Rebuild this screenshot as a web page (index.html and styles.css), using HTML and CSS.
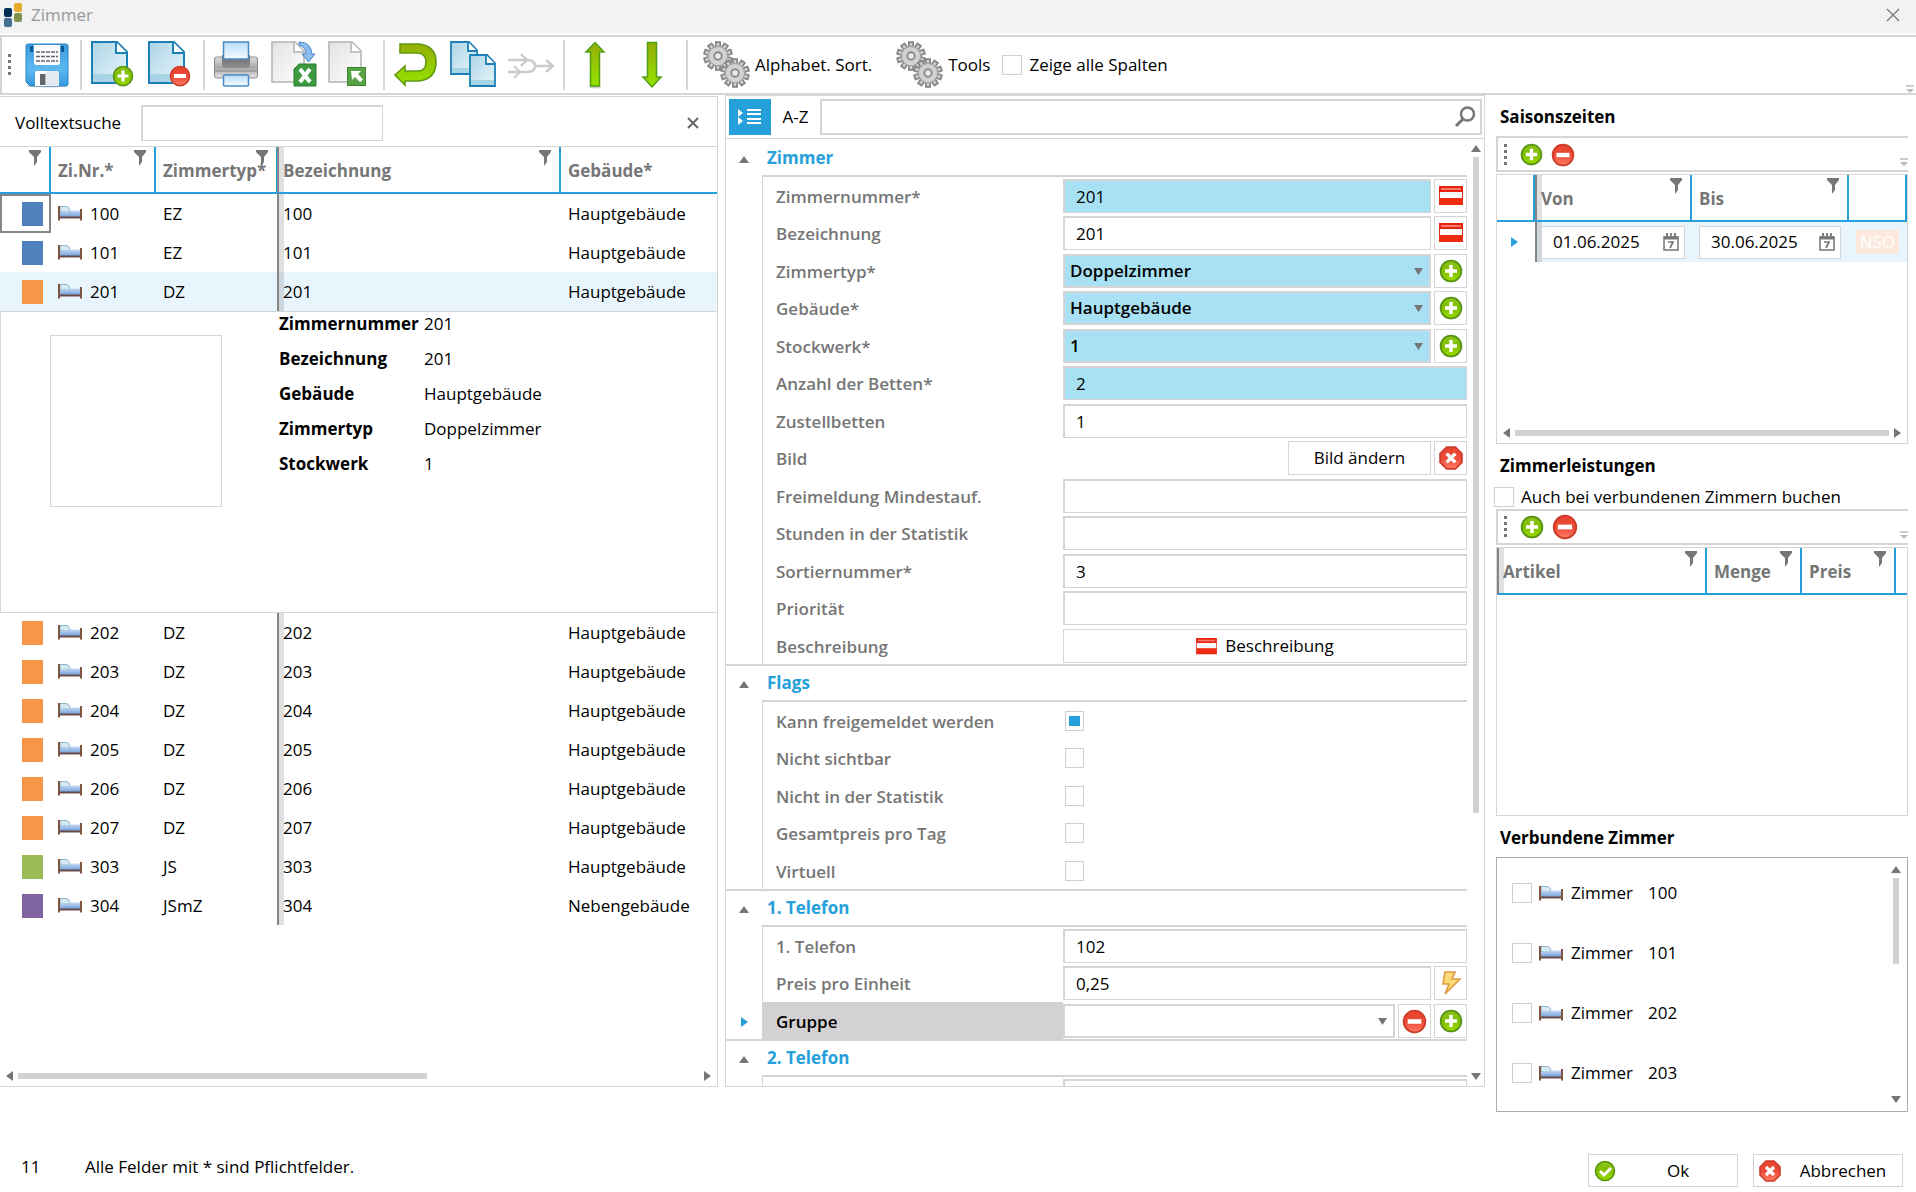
FILE: index.html
```html
<!DOCTYPE html>
<html lang="de">
<head>
  <meta charset="UTF-8">
  <title>Zimmer</title>
  <link rel="stylesheet" href="styles.css">
</head>
<body>
  <!-- Icons -->
  <svg class="sprite" width="0" height="0" aria-hidden="true">
    <defs>
      <linearGradient id="gBlue" x1="0" y1="0" x2="0" y2="1"><stop offset="0" stop-color="#3f9bdc"/><stop offset=".6" stop-color="#5cb8ee"/><stop offset="1" stop-color="#3596dc"/></linearGradient>
      <linearGradient id="gPage" x1="0" y1="0" x2="1" y2="1"><stop offset="0" stop-color="#add4e6"/><stop offset="1" stop-color="#e9f6fb"/></linearGradient>
      <linearGradient id="gGrey" x1="0" y1="0" x2="1" y2="1"><stop offset="0" stop-color="#e2e2e2"/><stop offset="1" stop-color="#ffffff"/></linearGradient>
      <linearGradient id="gGreen" x1="0" y1="0" x2="0" y2="1"><stop offset="0" stop-color="#8cc21c"/><stop offset=".5" stop-color="#7fbf00"/><stop offset="1" stop-color="#9ddb00"/></linearGradient>
      <linearGradient id="gRed" x1="0" y1="0" x2="0" y2="1"><stop offset="0" stop-color="#e8442f"/><stop offset=".5" stop-color="#ea4b37"/><stop offset="1" stop-color="#ff7a66"/></linearGradient>
      <linearGradient id="gMetal" x1="0" y1="0" x2="0" y2="1"><stop offset="0" stop-color="#dcdcdc"/><stop offset=".5" stop-color="#a9a9a9"/><stop offset="1" stop-color="#e0e0e0"/></linearGradient>
      <linearGradient id="gDark" x1="0" y1="0" x2="0" y2="1"><stop offset="0" stop-color="#6c6c6c"/><stop offset="1" stop-color="#8e8e8e"/></linearGradient>
      <linearGradient id="gPaper" x1="0" y1="0" x2="0" y2="1"><stop offset="0" stop-color="#b9defa"/><stop offset="1" stop-color="#f4fbff"/></linearGradient>
      <linearGradient id="gArrow" x1="0" y1="0" x2="0" y2="1"><stop offset="0" stop-color="#93ad08"/><stop offset="1" stop-color="#96e400"/></linearGradient>
      <linearGradient id="gBed" x1="0" y1="0" x2="0" y2="1"><stop offset="0" stop-color="#c9d9f4"/><stop offset="1" stop-color="#6f9fdb"/></linearGradient>
    </defs>

    <symbol id="i-logo" viewBox="0 0 18 24">
      <rect x="0" y="5" width="8" height="9" rx="2" fill="#032e54"/>
      <rect x="10" y="0" width="8" height="9" rx="2" fill="#e7ab2d"/>
      <rect x="0" y="15" width="8" height="9" rx="2" fill="#446f8e"/>
      <rect x="10" y="10" width="8" height="9" rx="2" fill="#7d924c"/>
    </symbol>
    <symbol id="i-save" viewBox="0 0 48 48">
      <ellipse cx="23" cy="45" rx="21" ry="1.500" fill="#c9c9c9"/>
      <path d="M4 3H42Q44 3 44 5V43Q44 45 42 45H6L2 41V5Q2 3 4 3Z" fill="url(#gBlue)" stroke="#2a86c8"/>
      <rect x="6" y="5" width="3" height="6" fill="#0a5a94"/><rect x="37" y="5" width="3" height="6" fill="#0a5a94"/>
      <path d="M10 4H36V22Q36 24 34 24H12Q10 24 10 22Z" fill="#fafcff"/>
      <path d="M12 11h22M12 15.500h22M12 20h22" stroke="#666" stroke-width="1.400" stroke-dasharray="4 1"/>
      <path d="M11 45V32Q11 30 13 30H33Q35 30 35 32V45Z" fill="#e4eaf4"/>
      <path d="M11 45V32Q11 30 13 30H22V45Z" fill="#fff"/>
      <rect x="16" y="33" width="5.500" height="11" fill="#63666b"/>
    </symbol>
    <symbol id="i-page" viewBox="0 0 48 48">
      <path d="M2 1H27L37 11V42H2Z" fill="url(#gPage)" stroke="#1b80b5" stroke-width="2"/>
      <path d="M3 33H36V41H3Z" fill="#a9d4e5"/>
      <path d="M26 1V12H37" fill="#fff" stroke="#1b80b5" stroke-width="2"/>
    </symbol>
    <symbol id="i-plus" viewBox="0 0 22 22">
      <circle cx="11" cy="11.500" r="10" fill="#b9cba0"/>
      <circle cx="11" cy="11" r="9.500" fill="url(#gGreen)" stroke="#569413" stroke-width="1.600"/>
      <path d="M11 5.500V16.500M5.500 11H16.500" stroke="#fff" stroke-width="3.200"/>
    </symbol>
    <symbol id="i-minus" viewBox="0 0 22 22">
      <circle cx="11" cy="11.500" r="10" fill="#dcb0aa"/>
      <circle cx="11" cy="11" r="9.500" fill="url(#gRed)" stroke="#cf3c2b" stroke-width="1.600"/>
      <rect x="5" y="9" width="12" height="4" fill="#fff"/>
    </symbol>
    <symbol id="i-new" viewBox="0 0 48 48">
      <use href="#i-page" width="48" height="48"/><use href="#i-plus" x="22" y="24" width="22" height="22"/>
    </symbol>
    <symbol id="i-del" viewBox="0 0 48 48">
      <use href="#i-page" width="48" height="48"/><use href="#i-minus" x="22" y="24" width="22" height="22"/>
    </symbol>
    <symbol id="i-print" viewBox="0 0 48 48">
      <rect x="1.500" y="16" width="43" height="21" rx="2" fill="url(#gMetal)" stroke="#8b8b8b"/>
      <path d="M9 14H37V24Q37 27 34 27H12Q9 27 9 24Z" fill="url(#gDark)"/>
      <rect x="10.500" y="1" width="25" height="17" fill="url(#gPaper)" stroke="#4b8bc6" stroke-width="1.500"/>
      <path d="M2 30H44" stroke="#848484"/>
      <rect x="10.500" y="34" width="25" height="11" rx="1" fill="url(#gPaper)" stroke="#4b8bc6" stroke-width="1.500"/>
    </symbol>
    <symbol id="i-greypage" viewBox="0 0 48 48">
      <path d="M2 1H25L34 10V41H2Z" fill="url(#gGrey)" stroke="#b4b4b4" stroke-width="1.500"/>
      <path d="M24 1V11H34" fill="#fff" stroke="#b4b4b4" stroke-width="1.500"/>
    </symbol>
    <symbol id="i-excel" viewBox="0 0 48 48">
      <use href="#i-greypage" width="48" height="48"/>
      <path d="M29 1Q41 1 42 13H45L38.500 21L32 13H36Q36 6 29 4Z" fill="#8bbdec" stroke="#4a87c4"/>
      <path d="M29 23H46V45H24V28Z" fill="#3c9a40" stroke="#287b2d"/>
      <path d="M30 28L40 41M40 28L30 41" stroke="#fff" stroke-width="4"/>
    </symbol>
    <symbol id="i-export" viewBox="0 0 48 48">
      <use href="#i-greypage" width="48" height="48"/>
      <rect x="20.500" y="26.500" width="18" height="18" fill="#57a345" stroke="#3b8430"/>
      <path d="M24 30H34L31 33L36 38.500L33 41L28 36L25 39Z" fill="#fff"/>
    </symbol>
    <symbol id="i-undo" viewBox="0 0 48 48">
      <path d="M7 3H26Q43 5 43 21Q43 38 26 40H12V44L2 34L12 25V30H25Q33 30 33 21Q33 13 25 12H7Z" fill="url(#gArrow)" stroke="#5f9a0f" stroke-width="1.600"/>
    </symbol>
    <symbol id="i-copy" viewBox="0 0 48 48">
      <path d="M1 1H19L27 9V33H1Z" fill="url(#gPage)" stroke="#1b80b5" stroke-width="1.800"/>
      <path d="M2 27H26V32H2Z" fill="#a9d4e5"/><path d="M18 1V10H27" fill="#fff" stroke="#1b80b5" stroke-width="1.800"/>
      <path d="M20 14H37L45 22V45H20Z" fill="url(#gPage)" stroke="#1b80b5" stroke-width="1.800"/>
      <path d="M21 39H44V44H21Z" fill="#a9d4e5"/><path d="M36 14V23H45" fill="#fff" stroke="#1b80b5" stroke-width="1.800"/>
    </symbol>
    <symbol id="i-merge" viewBox="0 0 48 48">
      <path d="M1 19H20Q28 19 28 25Q28 31 20 31H1M28 25H45M14 13L20 19L14 25M7 25L13 31L7 37M39 19L46 25L39 31" fill="none" stroke="#cbcbcb" stroke-width="2.400"/>
    </symbol>
    <symbol id="i-up" viewBox="2 0 48 48">
      <ellipse cx="24" cy="46" rx="6" ry="1.500" fill="#ccc"/>
      <path d="M24 1.500L33 11H28.500V45H19.500V11H15Z" fill="url(#gArrow)" stroke="#519e14" stroke-width="1.500"/>
    </symbol>
    <symbol id="i-down" viewBox="2 0 48 48">
      <path d="M24 46L33 36H28.500V1.500H19.500V36H15Z" fill="url(#gArrow)" stroke="#519e14" stroke-width="1.500"/>
    </symbol>
    <symbol id="i-gear" viewBox="0 0 28 28">
      <g fill="#cfcfcf" stroke="#858585" stroke-width="1.600">
        <rect x="12" y="1" width="4" height="26"/>
        <rect x="12" y="1" width="4" height="26" transform="rotate(36 14 14)"/>
        <rect x="12" y="1" width="4" height="26" transform="rotate(72 14 14)"/>
        <rect x="12" y="1" width="4" height="26" transform="rotate(108 14 14)"/>
        <rect x="12" y="1" width="4" height="26" transform="rotate(144 14 14)"/>
      </g>
      <circle cx="14" cy="14" r="9" fill="#d2d2d2" stroke="#a2a2a2"/>
      <circle cx="14" cy="14" r="3.500" fill="#e9e9e9" stroke="#8a8a8a" stroke-width="1.800"/>
    </symbol>
    <symbol id="i-gears" viewBox="0 0 48 48">
      <use href="#i-gear" x="0" y="0" width="30" height="30"/><use href="#i-gear" x="17" y="17" width="30" height="30"/>
    </symbol>
    <symbol id="i-bed" viewBox="0 0 24 16">
      <path d="M2 1.500H8Q12 2 12 7H2Z" fill="#d4e9f2" stroke="#8db6cd"/>
      <path d="M2 7H12V5.500H22.500V12H2Z" fill="url(#gBed)"/>
      <path d="M1 12.500H23" stroke="#6b4a48" stroke-width="2"/>
      <path d="M1 1V15.500M23 4V15.500" stroke="#80543f" stroke-width="2"/>
    </symbol>
    <symbol id="i-filter" viewBox="0 0 12 16">
      <path d="M0 0H12V2L8 7V12L5 16V7L0 2Z" fill="#767676"/>
    </symbol>
    <symbol id="i-flag" viewBox="0 0 24 20">
      <rect x=".5" y=".5" width="23" height="18" fill="#fff" stroke="#c9362a"/>
      <rect x="0" y="0" width="24" height="6" fill="#e8200e"/><rect x="2" y="2" width="20" height="2" fill="#f57a6c"/>
      <rect x="1" y="6" width="22" height="6" fill="#fbfbfb"/>
      <rect x="0" y="12" width="24" height="7" fill="#ee2c12"/>
    </symbol>
    <symbol id="i-cancel" viewBox="0 0 22 22">
      <path d="M7 1H15L21 7V15L15 21H7L1 15V7Z" fill="url(#gRed)" stroke="#cf3c2b" stroke-width="1.600"/>
      <path d="M7 7L15 15M15 7L7 15" stroke="#fff" stroke-width="3.200"/>
    </symbol>
    <symbol id="i-ok" viewBox="0 0 22 22">
      <circle cx="11" cy="11" r="9.500" fill="url(#gGreen)" stroke="#569413" stroke-width="1.600"/>
      <path d="M6 11L10 15L17 8" fill="none" stroke="#fff" stroke-width="3"/>
    </symbol>
    <symbol id="i-bolt" viewBox="0 0 22 24">
      <path d="M5 1H15L12 8H20L5 23L9 13H3Z" fill="#fbdb78" stroke="#dd9a3e" stroke-width="1.600"/>
    </symbol>
    <symbol id="i-cal" viewBox="0 0 16 18">
      <path d="M1 4H15V17H1Z" fill="none" stroke="#767676" stroke-width="1.500"/>
      <path d="M1 5H15" stroke="#767676" stroke-width="3"/>
      <path d="M4 0V4M8 0V3M12 0V4" stroke="#767676" stroke-width="1.800"/>
      <path d="M5 9H10L7 15" fill="none" stroke="#767676" stroke-width="1.700"/>
    </symbol>
    <symbol id="i-search" viewBox="0 0 22 22">
      <circle cx="13.500" cy="8" r="6.500" fill="none" stroke="#767676" stroke-width="2.500"/>
      <path d="M9 13L2 20" stroke="#767676" stroke-width="3"/>
    </symbol>
    <symbol id="i-list" viewBox="0 0 24 18">
      <path d="M0 1L5 5L0 9ZM0 9L5 13L0 17Z" fill="#fff"/>
      <path d="M9 2H23M9 6H23M9 11H23M9 15H23" stroke="#fff" stroke-width="1.800"/>
    </symbol>
    <symbol id="i-close" viewBox="0 0 14 14">
      <path d="M1 1L13 13M13 1L1 13" stroke="currentColor" stroke-width="1.300"/>
    </symbol>
    <symbol id="i-x" viewBox="0 0 12 12">
      <path d="M1 1L11 11M11 1L1 11" stroke="#666" stroke-width="2"/>
    </symbol>
    <symbol id="i-more" viewBox="0 0 8 8">
      <path d="M0 1H8" stroke="#bbb" stroke-width="1.500"/><path d="M0 4H8L4 8Z" fill="#bbb"/>
    </symbol>
    <symbol id="i-grip" viewBox="0 0 4 22">
      <path d="M0 0h3v3H0ZM0 6h3v3H0ZM0 12h3v3H0ZM0 18h3v3H0Z" fill="#767676"/>
    </symbol>
  </svg>

  <header class="titlebar">
    <svg class="logo"><use href="#i-logo"/></svg>
    <h1>Zimmer</h1>
    <button class="win-close" aria-label="Schließen"><svg width="14" height="14"><use href="#i-close"/></svg></button>
  </header>

  <div class="toolbar">
    <svg class="grip"><use href="#i-grip"/></svg>
    <div class="group">
      <button class="tool" aria-label="Speichern"><svg><use href="#i-save"/></svg></button>
    </div>
    <span class="sep"></span>
    <div class="group">
      <button class="tool" aria-label="Neu"><svg><use href="#i-new"/></svg></button>
      <button class="tool" aria-label="Löschen"><svg><use href="#i-del"/></svg></button>
    </div>
    <span class="sep"></span>
    <div class="group">
      <button class="tool" aria-label="Drucken"><svg><use href="#i-print"/></svg></button>
      <button class="tool" aria-label="Excel Export"><svg><use href="#i-excel"/></svg></button>
      <button class="tool" aria-label="Export"><svg><use href="#i-export"/></svg></button>
    </div>
    <span class="sep"></span>
    <div class="group">
      <button class="tool" aria-label="Rückgängig"><svg><use href="#i-undo"/></svg></button>
      <button class="tool" aria-label="Kopieren"><svg><use href="#i-copy"/></svg></button>
      <button class="tool" aria-label="Zusammenführen" disabled><svg><use href="#i-merge"/></svg></button>
    </div>
    <span class="sep"></span>
    <div class="group">
      <button class="tool" aria-label="Nach oben"><svg><use href="#i-up"/></svg></button>
      <button class="tool" aria-label="Nach unten"><svg><use href="#i-down"/></svg></button>
    </div>
    <span class="sep"></span>
    <div class="group text-tools">
      <button class="tool"><svg><use href="#i-gears"/></svg>Alphabet. Sort.</button>
      <button class="tool"><svg><use href="#i-gears"/></svg>Tools</button>
    </div>
    <label class="check"><input type="checkbox">Zeige alle Spalten</label>
    <svg class="more"><use href="#i-more"/></svg>
  </div>

  <main>
    <!-- Zimmerliste -->
    <section class="panel rooms">
      <div class="fulltext">
        <label for="volltext">Volltextsuche</label>
        <input type="text" id="volltext">
        <button class="plain" aria-label="Suche schließen"><svg width="12" height="12"><use href="#i-x"/></svg></button>
      </div>
      <table class="room-table">
        <colgroup><col class="c-color"><col class="c-nr"><col class="c-typ"><col class="c-bez"><col></colgroup>
        <thead>
          <tr>
            <th><div><span></span><svg class="filter"><use href="#i-filter"/></svg></div></th>
            <th><div><span>Zi.Nr.*</span><svg class="filter"><use href="#i-filter"/></svg></div></th>
            <th><div><span>Zimmertyp*</span><svg class="filter"><use href="#i-filter"/></svg></div></th>
            <th class="split"><div><span>Bezeichnung</span><svg class="filter"><use href="#i-filter"/></svg></div></th>
            <th><div><span>Gebäude*</span></div></th>
          </tr>
        </thead>
        <tbody>
          <tr><td class="focus"><i class="swatch blue"></i></td><td><svg class="bed"><use href="#i-bed"/></svg>100</td><td>EZ</td><td class="split">100</td><td>Hauptgebäude</td></tr>
          <tr><td><i class="swatch blue"></i></td><td><svg class="bed"><use href="#i-bed"/></svg>101</td><td>EZ</td><td class="split">101</td><td>Hauptgebäude</td></tr>
          <tr class="selected"><td><i class="swatch orange"></i></td><td><svg class="bed"><use href="#i-bed"/></svg>201</td><td>DZ</td><td class="split">201</td><td>Hauptgebäude</td></tr>
          <tr class="detail">
            <td colspan="5">
              <div class="detail-box">
                <div class="picture"></div>
                <dl>
                  <dt>Zimmernummer</dt><dd>201</dd>
                  <dt>Bezeichnung</dt><dd>201</dd>
                  <dt>Gebäude</dt><dd>Hauptgebäude</dd>
                  <dt>Zimmertyp</dt><dd>Doppelzimmer</dd>
                  <dt>Stockwerk</dt><dd>1</dd>
                </dl>
              </div>
            </td>
          </tr>
          <tr><td><i class="swatch orange"></i></td><td><svg class="bed"><use href="#i-bed"/></svg>202</td><td>DZ</td><td class="split">202</td><td>Hauptgebäude</td></tr>
          <tr><td><i class="swatch orange"></i></td><td><svg class="bed"><use href="#i-bed"/></svg>203</td><td>DZ</td><td class="split">203</td><td>Hauptgebäude</td></tr>
          <tr><td><i class="swatch orange"></i></td><td><svg class="bed"><use href="#i-bed"/></svg>204</td><td>DZ</td><td class="split">204</td><td>Hauptgebäude</td></tr>
          <tr><td><i class="swatch orange"></i></td><td><svg class="bed"><use href="#i-bed"/></svg>205</td><td>DZ</td><td class="split">205</td><td>Hauptgebäude</td></tr>
          <tr><td><i class="swatch orange"></i></td><td><svg class="bed"><use href="#i-bed"/></svg>206</td><td>DZ</td><td class="split">206</td><td>Hauptgebäude</td></tr>
          <tr><td><i class="swatch orange"></i></td><td><svg class="bed"><use href="#i-bed"/></svg>207</td><td>DZ</td><td class="split">207</td><td>Hauptgebäude</td></tr>
          <tr><td><i class="swatch green"></i></td><td><svg class="bed"><use href="#i-bed"/></svg>303</td><td>JS</td><td class="split">303</td><td>Hauptgebäude</td></tr>
          <tr><td><i class="swatch purple"></i></td><td><svg class="bed"><use href="#i-bed"/></svg>304</td><td>JSmZ</td><td class="split">304</td><td>Nebengebäude</td></tr>
        </tbody>
      </table>
      <div class="hscroll">
        <i class="arrow left"></i><div class="track"><div class="thumb part"></div></div><i class="arrow right"></i>
      </div>
    </section>

    <!-- Eigenschaften -->
    <section class="panel props">
      <div class="prop-search">
        <button class="cat" aria-label="Kategorien"><svg width="24" height="18"><use href="#i-list"/></svg></button>
        <button class="az">A-Z</button>
        <div class="search-box">
          <input type="text" aria-label="Suche"><svg width="22" height="22"><use href="#i-search"/></svg>
        </div>
      </div>
      <div class="prop-body">
        <div class="prop-list">
          <h2><i class="arrow up"></i><span>Zimmer</span></h2>
          <div class="rows">
            <div class="row"><i></i><label for="znr">Zimmernummer*</label><div class="field"><input class="req" type="text" id="znr" value="201"><button aria-label="Übersetzung"><svg width="24" height="20"><use href="#i-flag"/></svg></button></div></div>
            <div class="row"><i></i><label for="bez">Bezeichnung</label><div class="field"><input type="text" id="bez" value="201"><button aria-label="Übersetzung"><svg width="24" height="20"><use href="#i-flag"/></svg></button></div></div>
            <div class="row"><i></i><label for="typ">Zimmertyp*</label><div class="field"><select class="req" id="typ"><option>Doppelzimmer</option></select><button aria-label="Neu"><svg width="24" height="24"><use href="#i-plus"/></svg></button></div></div>
            <div class="row"><i></i><label for="geb">Gebäude*</label><div class="field"><select class="req" id="geb"><option>Hauptgebäude</option></select><button aria-label="Neu"><svg width="24" height="24"><use href="#i-plus"/></svg></button></div></div>
            <div class="row"><i></i><label for="stock">Stockwerk*</label><div class="field"><select class="req" id="stock"><option>1</option></select><button aria-label="Neu"><svg width="24" height="24"><use href="#i-plus"/></svg></button></div></div>
            <div class="row"><i></i><label for="betten">Anzahl der Betten*</label><div class="field"><input class="req" type="text" id="betten" value="2"></div></div>
            <div class="row"><i></i><label for="zustell">Zustellbetten</label><div class="field"><input type="text" id="zustell" value="1"></div></div>
            <div class="row"><i></i><label for="bild">Bild</label><div class="field end"><button class="wide" id="bild">Bild ändern</button><button aria-label="Bild löschen"><svg width="24" height="24"><use href="#i-cancel"/></svg></button></div></div>
            <div class="row"><i></i><label for="frei">Freimeldung Mindestauf.</label><div class="field"><input type="text" id="frei"></div></div>
            <div class="row"><i></i><label for="stunden">Stunden in der Statistik</label><div class="field"><input type="text" id="stunden"></div></div>
            <div class="row"><i></i><label for="sort">Sortiernummer*</label><div class="field"><input type="text" id="sort" value="3"></div></div>
            <div class="row"><i></i><label for="prio">Priorität</label><div class="field"><input type="text" id="prio"></div></div>
            <div class="row"><i></i><label for="beschr">Beschreibung</label><div class="field"><button class="full" id="beschr"><svg width="21" height="17"><use href="#i-flag"/></svg>Beschreibung</button></div></div>
          </div>
          <h2><i class="arrow up"></i><span>Flags</span></h2>
          <div class="rows">
            <div class="row"><i></i><label for="f1">Kann freigemeldet werden</label><div class="field flag"><input type="checkbox" id="f1" checked></div></div>
            <div class="row"><i></i><label for="f2">Nicht sichtbar</label><div class="field flag"><input type="checkbox" id="f2"></div></div>
            <div class="row"><i></i><label for="f3">Nicht in der Statistik</label><div class="field flag"><input type="checkbox" id="f3"></div></div>
            <div class="row"><i></i><label for="f4">Gesamtpreis pro Tag</label><div class="field flag"><input type="checkbox" id="f4"></div></div>
            <div class="row"><i></i><label for="f5">Virtuell</label><div class="field flag"><input type="checkbox" id="f5"></div></div>
          </div>
          <h2><i class="arrow up"></i><span>1. Telefon</span></h2>
          <div class="rows">
            <div class="row"><i></i><label for="tel1">1. Telefon</label><div class="field"><input type="text" id="tel1" value="102"></div></div>
            <div class="row"><i></i><label for="preis">Preis pro Einheit</label><div class="field"><input type="text" id="preis" value="0,25"><button aria-label="Berechnen"><svg width="22" height="24"><use href="#i-bolt"/></svg></button></div></div>
            <div class="row current"><i class="arrow right"></i><label for="gruppe">Gruppe</label><div class="field"><select id="gruppe"><option></option></select><button aria-label="Entfernen"><svg width="25" height="25"><use href="#i-minus"/></svg></button><button aria-label="Neu"><svg width="24" height="24"><use href="#i-plus"/></svg></button></div></div>
          </div>
          <h2><i class="arrow up"></i><span>2. Telefon</span></h2>
          <div class="rows">
            <div class="row"><i></i><label for="tel2"></label><div class="field"><input type="text" id="tel2" aria-label="2. Telefon"></div></div>
          </div>
        </div>
        <div class="vscroll">
          <i class="arrow up"></i><div class="track"><div class="thumb tall"></div></div><i class="arrow down"></i>
        </div>
      </div>
    </section>

    <!-- Rechte Spalte -->
    <aside>
      <h3>Saisonszeiten</h3>
      <div class="mini-toolbar">
        <svg class="grip"><use href="#i-grip"/></svg>
        <button class="plain" aria-label="Hinzufügen"><svg width="23" height="23"><use href="#i-plus"/></svg></button>
        <button class="plain" aria-label="Entfernen"><svg width="24" height="24"><use href="#i-minus"/></svg></button>
        <svg class="more"><use href="#i-more"/></svg>
      </div>
      <div class="grid-box season">
        <table>
          <colgroup><col class="s-mark"><col class="s-date"><col class="s-date"><col></colgroup>
          <thead>
            <tr>
              <th></th>
              <th class="split"><div><span>Von</span><svg class="filter"><use href="#i-filter"/></svg></div></th>
              <th><div><span>Bis</span><svg class="filter"><use href="#i-filter"/></svg></div></th>
              <th></th>
            </tr>
          </thead>
          <tbody>
            <tr>
              <td class="mark"><i class="arrow right"></i></td>
              <td class="split"><div class="date"><input type="text" value="01.06.2025" aria-label="Von"><svg width="16" height="18"><use href="#i-cal"/></svg></div></td>
              <td><div class="date"><input type="text" value="30.06.2025" aria-label="Bis"><svg width="16" height="18"><use href="#i-cal"/></svg></div></td>
              <td class="nso"><span>NSO</span></td>
            </tr>
          </tbody>
        </table>
        <div class="hscroll">
          <i class="arrow left"></i><div class="track"><div class="thumb"></div></div><i class="arrow right"></i>
        </div>
      </div>

      <h3>Zimmerleistungen</h3>
      <label class="check"><input type="checkbox">Auch bei verbundenen Zimmern buchen</label>
      <div class="mini-toolbar">
        <svg class="grip"><use href="#i-grip"/></svg>
        <button class="plain" aria-label="Hinzufügen"><svg width="24" height="24"><use href="#i-plus"/></svg></button>
        <button class="plain" aria-label="Entfernen"><svg width="26" height="26"><use href="#i-minus"/></svg></button>
        <svg class="more"><use href="#i-more"/></svg>
      </div>
      <div class="grid-box">
        <table>
          <colgroup><col><col class="a-menge"><col class="a-preis"><col class="a-rest"></colgroup>
          <thead>
            <tr>
              <th class="split"><div><span>Artikel</span><svg class="filter"><use href="#i-filter"/></svg></div></th>
              <th><div><span>Menge</span><svg class="filter"><use href="#i-filter"/></svg></div></th>
              <th><div><span>Preis</span><svg class="filter"><use href="#i-filter"/></svg></div></th>
              <th></th>
            </tr>
          </thead>
        </table>
      </div>

      <h3>Verbundene Zimmer</h3>
      <div class="linked">
        <ul>
          <li><label><input type="checkbox"><svg class="bed"><use href="#i-bed"/></svg><span>Zimmer</span><span>100</span></label></li>
          <li><label><input type="checkbox"><svg class="bed"><use href="#i-bed"/></svg><span>Zimmer</span><span>101</span></label></li>
          <li><label><input type="checkbox"><svg class="bed"><use href="#i-bed"/></svg><span>Zimmer</span><span>202</span></label></li>
          <li><label><input type="checkbox"><svg class="bed"><use href="#i-bed"/></svg><span>Zimmer</span><span>203</span></label></li>
        </ul>
        <div class="vscroll">
          <i class="arrow up"></i><div class="track"><div class="thumb short"></div></div><i class="arrow down"></i>
        </div>
      </div>
    </aside>
  </main>

  <footer>
    <span class="count">11</span>
    <span>Alle Felder mit * sind Pflichtfelder.</span>
    <div class="actions">
      <button><svg width="22" height="22"><use href="#i-ok"/></svg><span>Ok</span></button>
      <button><svg width="22" height="22"><use href="#i-cancel"/></svg><span>Abbrechen</span></button>
    </div>
  </footer>
</body>
</html>
```
FILE: styles.css
```css
* {
  box-sizing: border-box;
}
body {
  margin: 0;
  height: 100vh;
  display: flex;
  flex-direction: column;
  font-family: "Open Sans", "Noto Sans", sans-serif;
  font-size: 17px;
  line-height: 24px;
  color: #000;
  background: #fff;
}
svg, .sprite {
  display: block;
  flex: none;
}
button, input, select {
  font: inherit;
  color: inherit;
  margin: 0;
  border-radius: 0;
}
button {
  background: #fff;
  border: 1px solid #d6d4d5;
  padding: 0;
  display: flex;
  align-items: center;
  justify-content: center;
  flex: none;
}
input[type="text"] {
  min-width: 0;
  border: 2px solid #d6d4d5;
  border-right-width: 1px;
  border-bottom-width: 1px;
  background: #fff;
  outline: none;
}
input[type="checkbox"] {
  appearance: none;
  flex: none;
  width: 20px;
  height: 20px;
  border: 1px solid #d0cecf;
  background: #fff;
}
.plain {
  border: none;
  background: none;
}
h1, h2, h3, dl, dd, ul {
  margin: 0;
  padding: 0;
}

/* Titelleiste */
.titlebar {
  height: 33px;
  flex: none;
  display: flex;
  align-items: center;
  gap: 9px;
  padding: 0 16px 4px 4px;
  background: #f2f2f2;
  color: #999;
}
.titlebar h1 {
  font-size: 17px;
  font-weight: 400;
}
.logo {
  width: 18px;
  height: 24px;
}
.win-close {
  margin-left: auto;
  border: none;
  background: none;
  color: #777;
}

/* Werkzeugleiste */
.toolbar {
  flex: none;
  height: 60px;
  margin-top: 2px;
  padding: 0 2px 0 6px;
  display: flex;
  align-items: center;
  gap: 8px;
  border: 2px solid #d6d4d5;
  border-right: none;
}
.grip {
  width: 4px;
  height: 22px;
}
.toolbar .grip {
  margin-right: 4px;
}
.group {
  display: flex;
  gap: 9px;
}
.tool {
  border: none;
  background: none;
  gap: 4px;
}
.tool svg {
  width: 48px;
  height: 48px;
}
.sep {
  width: 2px;
  height: 50px;
  background: #d6d4d5;
}
.text-tools {
  gap: 24px;
  margin: 0 4px 0 7px;
}
.check {
  display: flex;
  align-items: center;
  gap: 7px;
}
.more {
  width: 8px;
  height: 8px;
  margin: 0 0 6px auto;
  align-self: flex-end;
}
.toolbar .more {
  margin-bottom: 0;
}

main {
  flex: 1;
  min-height: 0;
  display: grid;
  grid-template-columns: minmax(0, 718fr) minmax(0, 760fr) minmax(0, 416fr);
  gap: 7px;
  padding-right: 8px;
}
.panel {
  min-height: 0;
  margin-bottom: 25px;
  display: flex;
  flex-direction: column;
  border: 1px solid #d6d4d5;
}
.rooms {
  margin-top: 1px;
  border-left: none;
}

/* Pfeile und Bildlaufleisten */
.arrow {
  width: 0;
  height: 0;
  flex: none;
  border: 0 solid transparent;
}
.arrow.up {
  border-width: 0 5px 7px;
  border-bottom-color: #767676;
}
.arrow.down {
  border-width: 7px 5px 0;
  border-top-color: #767676;
}
.arrow.left {
  border-width: 5px 7px 5px 0;
  border-right-color: #767676;
}
.arrow.right {
  border-width: 5px 0 5px 7px;
  border-left-color: #767676;
}
.hscroll {
  margin-top: auto;
  height: 20px;
  display: flex;
  align-items: center;
  gap: 5px;
  padding: 0 6px;
}
.vscroll {
  width: 17px;
  flex: none;
  display: flex;
  flex-direction: column;
  align-items: center;
  gap: 5px;
  padding: 6px 0;
}
.track {
  flex: 1;
}
.thumb {
  width: 100%;
  height: 6px;
  background: #d3d1d2;
}
.thumb.part {
  width: 60%;
}
.vscroll .thumb {
  width: 6px;
}
.vscroll .tall {
  height: 656px;
}
.vscroll .short {
  height: 86px;
}

/* Tabellen */
table {
  width: 100%;
  table-layout: fixed;
  border-collapse: separate;
  border-spacing: 0;
}
th {
  height: 47px;
  padding: 0;
  text-align: left;
  font-weight: 700;
  color: #767676;
  border-right: 2px solid #26a0da;
  border-bottom: 2px solid #26a0da;
}
th div {
  height: 45px;
  display: flex;
  justify-content: space-between;
  padding: 3px 8px 0 7px;
}
th span {
  padding-top: 9px;
}
.filter {
  width: 12px;
  height: 16px;
}
td {
  height: 39px;
  padding: 0 7px;
}
.split {
  border-left: 2px solid #868686;
  background: linear-gradient(to right, rgba(0, 0, 0, 0.12) 5px, transparent 5px);
}
td.split, th.split div {
  padding-left: 4px;
}
.room-table {
  border-top: 1px solid #d6d4d5;
}
.room-table th:last-child {
  border-right: none;
}
.room-table th:nth-child(3) {
  border-right-width: 1px;
}
/* der Filter liegt hier über dem Spaltentitel */
.room-table th:nth-child(3) .filter {
  margin-left: -12px;
}
.c-color {
  width: 51px;
}
.c-nr {
  width: 105px;
}
.c-typ {
  width: 121px;
}
.c-bez {
  width: 284px;
}
.bed {
  width: 24px;
  height: 16px;
}
td .bed {
  display: inline-block;
  vertical-align: -1px;
  margin-right: 8px;
}
.swatch {
  display: block;
  width: 21px;
  height: 24px;
  margin-left: 15px;
}
.blue {
  background: #4f81bd;
}
.orange {
  background: #f79646;
}
.green {
  background: #9bbb59;
}
.purple {
  background: #8064a2;
}
.focus {
  border: 2px solid #868686;
}
.focus .swatch {
  margin-left: 13px;
}
.selected td {
  background-color: #e9f5fc;
}
.fulltext {
  height: 49px;
  flex: none;
  display: flex;
  align-items: center;
  gap: 20px;
  padding: 2px 18px 0 15px;
}
.fulltext input {
  width: 242px;
  height: 36px;
}
.fulltext button {
  margin-left: auto;
}
.detail td {
  padding: 0;
  border: 1px solid #d6d4d5;
  border-right: none;
}
.detail-box {
  height: 300px;
  display: flex;
  gap: 57px;
  padding-left: 49px;
}
.picture {
  width: 172px;
  height: 172px;
  margin-top: 23px;
  border: 1px solid #d6d4d5;
}
dl {
  display: grid;
  grid-template-columns: 145px auto;
  grid-auto-rows: 35px;
  align-content: start;
}
dt {
  font-weight: 700;
}

/* Eigenschaften */
.prop-search {
  height: 43px;
  flex: none;
  display: flex;
  align-items: center;
  padding: 0 2px 0 3px;
  border-bottom: 1px solid #d6d4d5;
}
.cat {
  width: 42px;
  height: 36px;
  border: none;
  background: #26a0da;
}
.az {
  width: 49px;
  border: none;
  background: none;
}
.search-box {
  flex: 1;
  height: 36px;
  display: flex;
  align-items: center;
  padding-right: 4px;
  border: 2px solid #d6d4d5;
}
.search-box input[type="text"] {
  flex: 1;
  border: none;
}
.prop-body {
  flex: 1;
  min-height: 0;
  display: flex;
}
.prop-list {
  flex: 1;
  min-width: 0;
  overflow: hidden;
}
h2 {
  display: grid;
  grid-template-columns: 36px 1fr;
  align-items: center;
  justify-items: center;
  border-top: 2px solid #d6d4d5;
  font-size: 17px;
  font-weight: 700;
  color: #26a0da;
}
h2:first-child {
  border-top-color: transparent;
}
h2 span {
  justify-self: stretch;
  height: 36px;
  line-height: 34px;
  padding-left: 5px;
  border-bottom: 2px solid #d6d4d5;
}
.row {
  height: 37px;
  display: grid;
  grid-template-columns: 36px 301px 1fr;
  align-items: center;
  justify-items: center;
}
.row:nth-child(even) {
  height: 38px;
}
.row label {
  justify-self: stretch;
  align-self: stretch;
  line-height: 39px;
  padding-left: 13px;
  border-left: 1px solid #d6d4d5;
  font-weight: 600;
  color: #767676;
}
.row .arrow.right {
  border-left-color: #26a0da;
}
.row.current label {
  background: #d3d1d2;
  color: #000;
}
.field {
  justify-self: stretch;
  align-self: stretch;
  display: flex;
  gap: 3px;
  padding: 2px 0 3px;
}
.field > input[type="text"], .field select {
  flex: 1;
  padding: 0 11px;
}
.field select {
  min-width: 0;
  appearance: none;
  outline: none;
  padding: 0 5px;
  border: 2px solid #d6d4d5;
  font-weight: 600;
  background: #fff url("data:image/svg+xml,%3Csvg xmlns='http://www.w3.org/2000/svg' width='9' height='7'%3E%3Cpath d='M0 0H9L4.500 7Z' fill='%23767676'/%3E%3C/svg%3E") no-repeat right 6px center;
}
.field input.req, .field select.req {
  background-color: #a8e1f3;
}
.field button {
  width: 33px;
}
.end {
  justify-content: flex-end;
}
.field .wide {
  width: 143px;
}
.field .full {
  flex: 1;
  gap: 8px;
}
.flag {
  align-items: center;
  padding-left: 2px;
}
.flag input {
  width: 19px;
  height: 20px;
}
.flag input:checked {
  background: #26a0da;
  background-clip: content-box;
  padding: 4px 3px;
}

/* Rechte Spalte */
aside {
  min-height: 0;
  display: flex;
  flex-direction: column;
  padding-left: 4px;
}
h3 {
  height: 41px;
  flex: none;
  padding: 0 4px;
  line-height: 44px;
  font-size: 17px;
  font-weight: 700;
}
aside > .check {
  height: 24px;
  flex: none;
  margin-left: -2px;
}
.mini-toolbar {
  height: 36px;
  flex: none;
  display: flex;
  align-items: center;
  gap: 8px;
  margin-bottom: 2px;
  padding: 1px 0 0 6px;
  border: 2px solid #d6d4d5;
  border-right: none;
}
.mini-toolbar .grip {
  margin-right: 4px;
}
.mini-toolbar .more {
  margin-bottom: 4px;
}
.grid-box {
  flex: 270 1 0;
  min-height: 0;
  display: flex;
  flex-direction: column;
  border: 1px solid #d6d4d5;
}
.s-mark {
  width: 38px;
}
.s-date {
  width: 157px;
}
.season td {
  height: 40px;
  background-color: #e9f5fc;
}
.season td.mark {
  background: none;
  padding-left: 14px;
}
.mark .arrow {
  display: block;
  border-left-color: #26a0da;
}
.season td:nth-child(3) {
  padding-right: 8px;
}
.date {
  height: 33px;
  display: flex;
  align-items: center;
  padding: 0 5px 0 11px;
  border: 1px solid #d6d4d5;
  background: #fff;
}
.date input[type="text"] {
  flex: 1;
  width: 0;
  padding: 0;
  border: none;
}
.nso span {
  display: block;
  width: 43px;
  background: #fde9dc;
  color: #fff;
  text-align: center;
}
.a-menge {
  width: 95px;
}
.a-preis {
  width: 94px;
}
.a-rest {
  width: 11px;
}
.grid-box:not(.season) th:last-child {
  border-right: none;
}
.linked {
  flex: 255 1 0;
  min-height: 0;
  display: flex;
  border: 1px solid #abadb3;
}
.linked ul {
  flex: 1;
  overflow: hidden;
  list-style: none;
  padding: 5px 15px;
}
.linked li {
  height: 60px;
}
.linked label {
  height: 60px;
  display: flex;
  align-items: center;
}
.linked .bed {
  margin: 0 8px 0 7px;
}
.linked span {
  min-width: 77px;
}
.linked .vscroll {
  width: 22px;
  padding: 8px 0;
}

footer {
  height: 80px;
  flex: none;
  display: flex;
  align-items: center;
  padding: 30px 13px 0 21px;
}
.count {
  width: 64px;
}
.actions {
  margin-left: auto;
  display: flex;
  gap: 15px;
  padding-top: 7px;
}
.actions button {
  width: 150px;
  height: 33px;
  padding: 0 5px;
}
.actions span {
  flex: 1;
  padding-left: 8px;
}
```
